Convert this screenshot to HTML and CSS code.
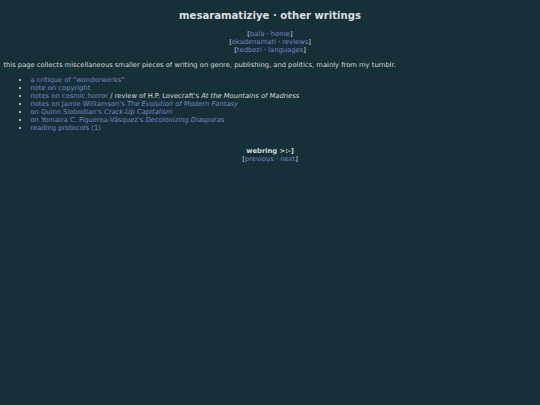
FILE: index.html
```html
<!DOCTYPE html>
<html>
<head>
<meta charset="utf-8">
<title>mesaramatiziye · other writings</title>
<link rel="stylesheet" href="styles.css">
</head>
<body>
<h1 class="title">mesaramatiziye · other writings</h1>
<div class="nav">
  <div>[<a href="#">bala</a> · <a href="#">home</a>]</div>
  <div>[<a href="#">okadenamati</a> · <a href="#">reviews</a>]</div>
  <div>[<a href="#">tedbezi</a> · <a href="#">languages</a>]</div>
</div>
<p class="intro">this page collects miscellaneous smaller pieces of writing on genre, publishing, and politics, mainly from my tumblr.</p>
<ul class="list">
  <li><a href="#">a critique of "wonderworks"</a></li>
  <li><a href="#">note on copyright</a></li>
  <li><a href="#">notes on cosmic horror</a> / review of H.P. Lovecraft's <i>At the Mountains of Madness</i></li>
  <li><a href="#">notes on Jamie Williamson's <i>The Evolution of Modern Fantasy</i></a></li>
  <li><a href="#">on Quinn Slobodian's <i>Crack-Up Capitalism</i></a></li>
  <li><a href="#">on Yomaira C. Figueroa-Vásquez's <i>Decolonizing Diasporas</i></a></li>
  <li><a href="#">reading protocols (1)</a></li>
</ul>
<div class="webring">
  <div class="wr-title">webring &gt;:-]</div>
  <div>[<a href="#">previous</a> · <a href="#">next</a>]</div>
</div>
</body>
</html>
```
FILE: styles.css
```css
html {
  background: #153037;
}
body {
  margin: 3.4px;
  font-family: "DejaVu Sans", Verdana, sans-serif;
  font-size: 6.75px;
  line-height: 8px;
  color: #d4d8d8;
  background: #153037;
}
a {
  color: #7485c8;
  text-decoration: none;
}
.title {
  text-align: center;
  font-size: 10.1px;
  line-height: 14px;
  font-weight: bold;
  color: #dcdfe0;
  margin: 6px 0 7px;
}
.nav {
  text-align: center;
}
.intro {
  margin: 7px 0 7px;
}
.list {
  margin: 6px 0;
  padding-left: 27px;
}
.webring {
  text-align: center;
  margin-top: 15px;
}
.wr-title {
  font-weight: bold;
}
```
